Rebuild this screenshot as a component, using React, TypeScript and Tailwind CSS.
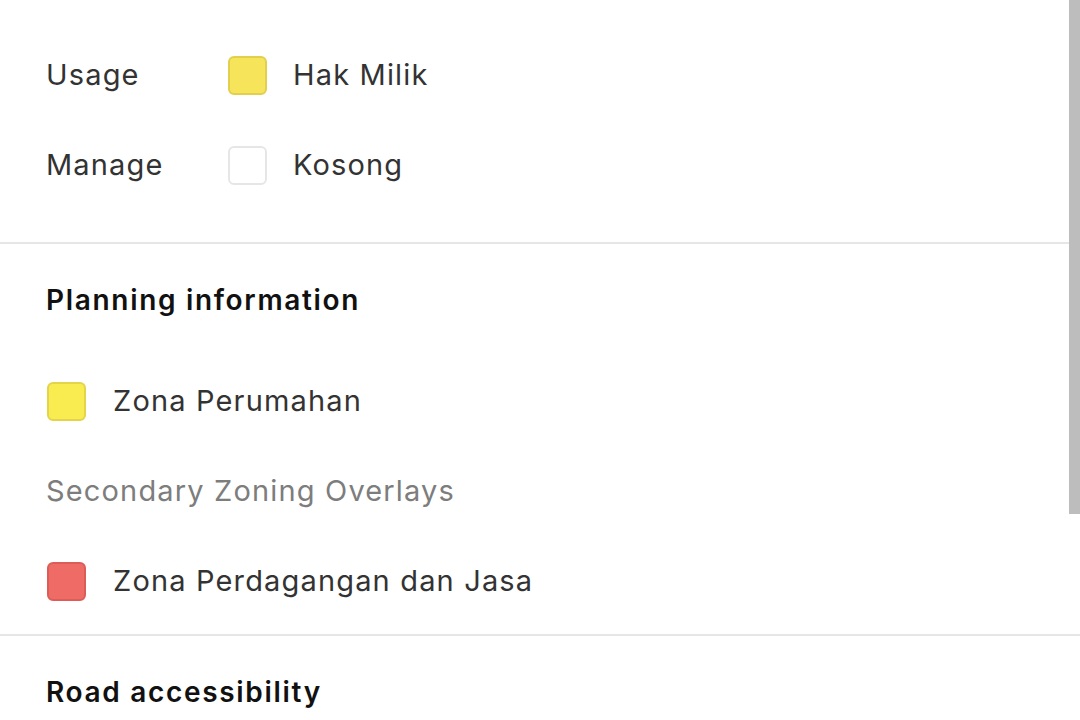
const font = { fontFamily: 'Inter, "Noto Sans", sans-serif' };

function Swatch({ color }: { color: 'yellow' | 'paleYellow' | 'red' | 'empty' }) {
  const styles = {
    yellow: 'bg-[#f9ec50] border-[#e3d44a]',
    paleYellow: 'bg-[#f6e55a] border-[#e2cf4e]',
    red: 'bg-[#ef6b66] border-[#de5c58]',
    empty: 'bg-white border-[#e6e6e6]',
  };
  return <div className={`h-[39px] w-[39px] shrink-0 rounded-[6px] border-2 ${styles[color]}`} />;
}

function KeyRow({ label, color, value }: { label: string; color: 'paleYellow' | 'empty'; value: string }) {
  return (
    <div className="flex h-[90px] items-center">
      <span className="w-[182px] text-[29px] tracking-[0.04em] text-[#333333]">{label}</span>
      <Swatch color={color} />
      <span className="ml-[26px] text-[29px] tracking-[0.04em] text-[#333333]">{value}</span>
    </div>
  );
}

function ZoneRow({ color, value }: { color: 'yellow' | 'red'; value: string }) {
  return (
    <div className="flex h-[90px] items-center">
      <Swatch color={color} />
      <span className="ml-[27px] text-[29px] tracking-[0.04em] text-[#333333]">{value}</span>
    </div>
  );
}

export default function App() {
  return (
    <div className="relative h-[720px] w-[1080px] overflow-hidden bg-white" style={font}>
      {/* Ownership */}
      <div className="pl-[46px] pr-[46px] pt-[30px] pb-[32px]">
        <KeyRow label="Usage" color="paleYellow" value="Hak Milik" />
        <KeyRow label="Manage" color="empty" value="Kosong" />
      </div>
      <div className="h-[2px] bg-[#e6e6e6]" />

      {/* Planning */}
      <div className="pl-[47px] pr-[46px] pb-[8px]">
        <div className="flex h-[112px] items-center">
          <h2 className="-ml-px text-[28px] font-semibold tracking-[0.06em] text-[#111111]">Planning information</h2>
        </div>
        <ZoneRow color="yellow" value="Zona Perumahan" />
        <div className="flex h-[90px] items-center">
          <span className="-ml-px text-[29px] tracking-[0.04em] text-[#7d7d7d]">Secondary Zoning Overlays</span>
        </div>
        <ZoneRow color="red" value="Zona Perdagangan dan Jasa" />
      </div>
      <div className="h-[2px] bg-[#e6e6e6]" />

      {/* Road */}
      <div className="pl-[46px] pr-[46px]">
        <div className="flex h-[112px] items-center">
          <h2 className="text-[28px] font-semibold tracking-[0.06em] text-[#111111]">Road accessibility</h2>
        </div>
      </div>

      {/* scrollbar thumb */}
      <div className="absolute right-0 top-0 h-[514px] w-[11px] bg-[#bdbdbd]" />
    </div>
  );
}
